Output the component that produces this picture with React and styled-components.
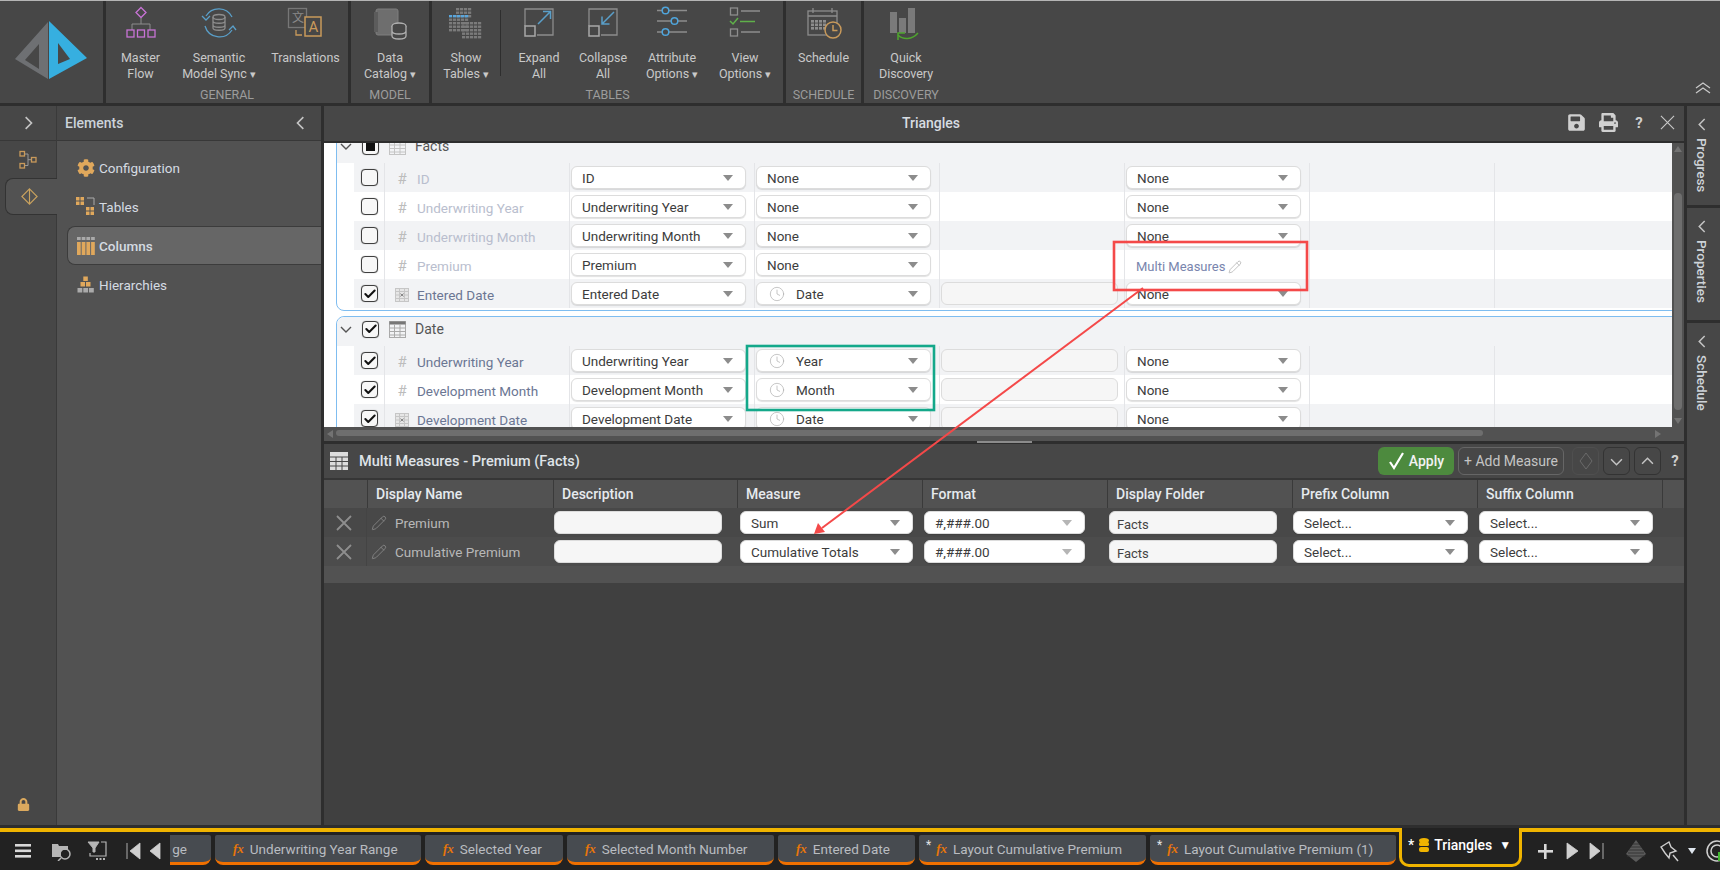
import React from "react";
import styled, { createGlobalStyle } from "styled-components";
import { Check, Clock, Pencil } from "lucide-react";
import { FaCog, FaLock, FaPrint, FaSave } from "react-icons/fa";

const GlobalStyle = createGlobalStyle`
  html, body, #root { margin: 0; height: 100%; }
  body {
    background: #2e2e2e;
    font-family: Roboto, "Liberation Sans", sans-serif;
    font-size: 13px;
    overflow: hidden;
  }
  * { box-sizing: border-box; }
`;

const Page = styled.div`
  position: relative;
  width: 1720px;
  height: 870px;
  display: flex;
  flex-direction: column;
  overflow: hidden;
  background: #2e2e2e;
`;

/* ---------- ribbon ---------- */

const Ribbon = styled.header`
  height: 106px;
  display: flex;
  background: #474747;
  border-top: 1px solid #b5b5b5;
  border-bottom: 3px solid #2e2e2e;
  position: relative;
`;

const LogoBox = styled.div`
  width: 103px;
  display: flex;
  align-items: flex-start;
  padding: 19px 0 0 14px;
`;

const Group = styled.section`
  width: ${(p) => p.$w}px;
  display: flex;
  flex-direction: column;
  border-left: 3px solid #2e2e2e;
`;

const GroupItems = styled.div`
  flex: 1;
  display: flex;
`;

const GroupLabel = styled.div`
  height: 19px;
  margin-bottom: -1px;
  line-height: 19px;
  text-align: center;
  color: #9c9c9c;
  font-size: 12.5px;
`;

const ToolButton = styled.div`
  width: ${(p) => p.$w}px;
  flex: none;
  display: flex;
  flex-direction: column;
  align-items: center;
  padding-top: 5px;
  color: #c9c9c9;
  font-size: 12.5px;
  line-height: 15.5px;
  text-align: center;
`;

const ToolIcon = styled.div`
  height: 38px;
  margin-bottom: 6px;
`;

const ToolSep = styled.div`
  width: 1px;
  height: 66px;
  margin: 9px 3px 0 0;
  background: #2e2e2e;
`;

const Caret = styled.span`
  font-size: 11px;
  margin-left: 3px;
`;

const RibbonCollapse = styled.div`
  position: absolute;
  right: 8px;
  top: 80px;
`;

/* ---------- body ---------- */

const Body = styled.div`
  height: 719px;
  display: flex;
`;

const Rail = styled.aside`
  width: 57px;
  display: flex;
  flex-direction: column;
  background: #474747;
  border-right: 1px solid #3a3a3a;
`;

const RailHead = styled.div`
  height: 35px;
  display: flex;
  align-items: center;
  justify-content: center;
  border-bottom: 1px solid #383838;
`;

const RailItem = styled.div`
  height: 37px;
  display: flex;
  align-items: center;
  justify-content: center;
  margin-left: ${(p) => (p.$active ? 5 : 0)}px;
  margin-right: ${(p) => (p.$active ? -1 : 0)}px;
  padding-right: ${(p) => (p.$active ? 5 : 0)}px;
  ${(p) =>
    p.$active &&
    `
    background: #525252;
    border: 1px solid #333;
    border-right: none;
    border-radius: 8px 0 0 8px;
  `}
`;

const RailFoot = styled.div`
  margin-top: auto;
  padding: 0 0 11px 17px;
  color: #dba95e;
  font-size: 13px;
`;

const Elements = styled.aside`
  width: 264px;
  background: #525252;
  display: flex;
  flex-direction: column;
`;

const ElementsHead = styled.div`
  height: 35px;
  display: flex;
  align-items: center;
  justify-content: space-between;
  padding: 0 13px 0 8px;
  background: #474747;
  border-bottom: 1px solid #383838;
  color: #ccd3da;
  font-size: 14px;
  font-weight: 500;
`;

const NavList = styled.nav`
  display: flex;
  flex-direction: column;
  padding: 7px 0 0 10px;
`;

const NavItem = styled.div`
  height: 39px;
  display: flex;
  align-items: center;
  gap: 4px;
  padding-left: ${(p) => (p.$active ? 8 : 9)}px;
  color: #d5dbe2;
  font-size: 13.5px;
  font-weight: ${(p) => (p.$active ? 500 : 400)};
  ${(p) =>
    p.$active &&
    `
    background: #666;
    border: 1px solid #3c3c3c;
    border-right: none;
    border-radius: 8px 0 0 8px;
  `}
`;

const NavIcon = styled.span`
  width: 19px;
  display: flex;
  justify-content: center;
  color: #e0a85c;
`;

const Main = styled.main`
  width: 1360px;
  margin-left: 3px;
  display: flex;
  flex-direction: column;
  background: #404040;
`;

const TitleBar = styled.div`
  height: 37px;
  flex: none;
  position: relative;
  display: flex;
  align-items: center;
  justify-content: flex-end;
  gap: 13px;
  padding: 0 9px 2px 0;
  background: #474747;
  border-bottom: 2px solid #2e2e2e;
  color: #d0d0d0;
`;

const TitleText = styled.div`
  position: absolute;
  left: 0;
  right: 146px;
  top: 9px;
  text-align: center;
  font-size: 14px;
  font-weight: 500;
  color: #d8dde2;
`;

const HelpMark = styled.span`
  width: 16px;
  margin-left: ${(p) => p.$ml || 0}px;
  text-align: center;
  font-size: 15px;
  font-weight: 700;
  color: #d0d0d0;
`;

const UpperPane = styled.div`
  height: 284px;
  flex: none;
  display: flex;
`;

const ListArea = styled.div`
  width: 1348px;
  background: #fff;
  overflow: hidden;
  padding-left: 12px;
`;

const TableGroup = styled.div`
  margin-top: ${(p) => p.$mt}px;
  margin-right: -12px;
  padding-bottom: 2px;
  border: 1px solid #7fbdf0;
  border-radius: 8px 0 0 8px;
`;

const GroupHead = styled.div`
  height: 29px;
  display: flex;
  align-items: center;
  padding-bottom: 5px;
  background: #f2f3f5;
  border-radius: 8px 0 0 0;
  color: #555;
  font-size: 14px;
`;

const Toggle = styled.span`
  width: 25px;
  display: flex;
  justify-content: center;
  padding-right: 8px;
`;

const HeadIcon = styled.span`
  width: 33px;
  margin-left: 3px;
  padding-left: 7px;
  display: flex;
  align-items: center;
  flex: none;
`;

const Row = styled.div`
  height: 29px;
  margin-left: 17px;
  display: grid;
  grid-template-columns: 30px repeat(6, 185px) 1fr;
  background: ${(p) => (p.$alt ? "#f2f3f5" : "#fff")};
`;

const Cell = styled.div`
  display: flex;
  align-items: center;
  padding-left: 1px;
  border-left: 1px solid #e4e5e8;
`;

const CheckCell = styled.div`
  display: flex;
  align-items: center;
  justify-content: center;
  padding-left: 1px;
`;

const NameCell = styled(Cell)`
  gap: 8px;
  padding: 2px 0 0 10px;
  color: ${(p) => (p.$on ? "#6b7693" : "#b9bece")};
  font-size: 13.5px;
`;

const Hash = styled.span`
  width: 14px;
  text-align: center;
  color: #bcbcbc;
  font-size: 15px;
`;

const LinkText = styled.div`
  display: flex;
  align-items: center;
  gap: 3px;
  padding: 4px 0 0 10px;
  color: #7985ad;
  font-size: 13px;
`;

const Box = styled.span`
  width: 17px;
  height: 17px;
  display: flex;
  align-items: center;
  justify-content: center;
  flex: none;
  background: #f7f7f7;
  border: 1px solid #3f3f3f;
  border-radius: 4px;
  box-shadow: 0 0 1px #888;
`;

const BoxFill = styled.span`
  width: 9px;
  height: 9px;
  background: #111;
`;

const Select = styled.div`
  width: ${(p) => p.$w || 175}px;
  height: 23px;
  margin-left: ${(p) => p.$ml || 0}px;
  display: flex;
  align-items: center;
  flex: none;
  padding: 0 12px 0 10px;
  background: #fff;
  border: 1px solid #dcdcdc;
  border-radius: 6px;
  box-shadow: 0 1px 1px rgba(0, 0, 0, 0.12);
  color: #3c3c3c;
  font-size: 13.5px;
`;

const SelectText = styled.span`
  flex: 1;
  display: flex;
  align-items: center;
  gap: 11px;
  white-space: nowrap;
`;

const Arrow = styled.span`
  width: 0;
  height: 0;
  border-left: 5px solid transparent;
  border-right: 5px solid transparent;
  border-top: 6px solid ${(p) => (p.$soft ? "#b5b5b5" : "#8c8c8c")};
`;

const Field = styled.div`
  width: ${(p) => p.$w}px;
  height: 23px;
  margin-left: ${(p) => p.$ml || 0}px;
  display: flex;
  align-items: center;
  flex: none;
  padding: 3px 0 0 7px;
  background: #f6f6f6;
  border: 1px solid #dcdcdc;
  border-radius: 6px;
  color: #444;
  font-size: 13px;
`;

const VScroll = styled.div`
  width: 12px;
  position: relative;
  background: #525252;
  &::before,
  &::after {
    content: "";
    position: absolute;
    left: 2px;
    border-left: 4px solid transparent;
    border-right: 4px solid transparent;
  }
  &::before {
    top: 3px;
    border-bottom: 6px solid #737373;
  }
  &::after {
    bottom: 3px;
    border-top: 6px solid #737373;
  }
`;

const VThumb = styled.div`
  position: absolute;
  left: 2px;
  right: 2px;
  top: 50px;
  height: 217px;
  border-radius: 4px;
  background: #6e6e6e;
`;

const HScroll = styled.div`
  height: 14px;
  flex: none;
  position: relative;
  background: #525252;
  &::before,
  &::after {
    content: "";
    position: absolute;
    top: 3px;
    border-top: 4px solid transparent;
    border-bottom: 4px solid transparent;
  }
  &::before {
    left: 3px;
    border-right: 6px solid #737373;
  }
  &::after {
    right: 23px;
    border-left: 6px solid #737373;
  }
`;

const HThumb = styled.div`
  position: absolute;
  left: 12px;
  width: 1147px;
  top: 3px;
  height: 6px;
  border-radius: 3px;
  background: #6e6e6e;
`;

const Splitter = styled.div`
  height: 3px;
  flex: none;
  display: flex;
  justify-content: center;
  background: #2e2e2e;
`;

const SplitGrip = styled.div`
  width: 55px;
  height: 2px;
  background: #8c8c8c;
`;

const LowerHead = styled.div`
  height: 36px;
  flex: none;
  display: flex;
  align-items: center;
  gap: 11px;
  padding: 0 1px 0 6px;
  background: #474747;
  border-bottom: 2px solid #363636;
`;

const LowerTitle = styled.div`
  flex: 1;
  color: #dfe3e8;
  font-size: 14.5px;
  font-weight: 500;
`;

const LowerTools = styled.div`
  display: flex;
  align-items: center;
  gap: 4px;
`;

const ApplyButton = styled.div`
  width: 76px;
  height: 28px;
  display: flex;
  align-items: center;
  justify-content: center;
  gap: 4px;
  background: #4d8a3e;
  border-radius: 6px;
  color: #f2f2f2;
  font-size: 14px;
  font-weight: 500;
`;

const AddButton = styled.div`
  width: 106px;
  height: 28px;
  display: flex;
  align-items: center;
  justify-content: center;
  border: 1px solid #666;
  border-radius: 6px;
  color: #c4c4c4;
  font-size: 14px;
`;

const IconButton = styled.div`
  width: 27px;
  height: 28px;
  margin-left: ${(p) => p.$ml || 0}px;
  display: flex;
  align-items: center;
  justify-content: center;
  border: 1px solid ${(p) => (p.$dim ? "#4f4f4f" : "#333")};
  border-radius: 6px;
`;

const GridRow = styled.div`
  height: ${(p) => p.$h}px;
  display: grid;
  grid-template-columns: 43px 186px 184px 185px 185px 185px 185px 185px 1fr;
  background: ${(p) => p.$bg};
`;

const HeadCell = styled.div`
  display: flex;
  align-items: center;
  padding-left: 8px;
  border-left: ${(p) => (p.$first ? "none" : "1px solid #3a3a3a")};
  color: #e6eaee;
  font-size: 14px;
  font-weight: 500;
`;

const BodyCell = styled.div`
  display: flex;
  align-items: center;
  gap: 8px;
  padding-left: ${(p) => p.$pl || 0}px;
  color: #b8b8b8;
  font-size: 13.5px;
`;

const RowX = styled(BodyCell)`
  justify-content: center;
  padding-right: 3px;
  border-right: 1px solid #444;
`;

const LowerRest = styled.div`
  height: 17px;
  flex: none;
  background: #525252;
`;

const SidePanel = styled.aside`
  width: 33px;
  margin-left: 3px;
  display: flex;
  flex-direction: column;
  background: #474747;
`;

const SideTab = styled.div`
  height: ${(p) => p.$h}px;
  display: flex;
  flex-direction: column;
  align-items: center;
  gap: 7px;
  padding: 12px 3px 0 0;
  border-bottom: ${(p) => (p.$last ? "none" : "3px solid #2e2e2e")};
  color: #ced3d8;
  font-size: 13.5px;
  font-weight: 500;
`;

const SideText = styled.span`
  writing-mode: vertical-rl;
`;

/* ---------- bottom tabs ---------- */

const TabBar = styled.footer`
  height: 42px;
  margin-top: 3px;
  display: flex;
  background: #222;
  border-top: 4px solid #f0b400;
`;

const LeftTools = styled.div`
  width: 170px;
  flex: none;
  display: flex;
  align-items: center;
  padding-left: 8px;
`;

const Slot = styled.span`
  width: ${(p) => p.$w}px;
  flex: none;
  display: flex;
  justify-content: center;
  margin-left: ${(p) => p.$ml || 0}px;
`;

const Tabs = styled.div`
  display: flex;
  gap: 4px;
  padding-top: 3px;
`;

const Tab = styled.div`
  width: ${(p) => p.$w}px;
  height: 30px;
  flex: none;
  display: flex;
  align-items: center;
  justify-content: ${(p) => (p.$clip ? "flex-end" : "flex-start")};
  gap: 6px;
  padding: ${(p) => (p.$clip ? "0 24px 0 0" : `0 0 0 ${p.$pl || 16}px`)};
  background: #474b50;
  border-bottom: 3px solid #f07000;
  border-radius: ${(p) => (p.$clip ? "0 2px 8px 0" : "2px 2px 8px 8px")};
  color: #b9bcc0;
  font-size: 13.5px;
  white-space: nowrap;
`;

const Fx = styled.span`
  font-family: "Liberation Serif", serif;
  font-style: italic;
  font-weight: 700;
  color: #e8760a;
  font-size: 13px;
`;

const Star = styled.span`
  align-self: flex-start;
  margin: 3px -1px 0 -9px;
  color: #e4e4e4;
  font-size: 12px;
`;

const ActiveTab = styled.div`
  width: 123px;
  height: 39px;
  margin: -4px 0 0 3px;
  flex: none;
  display: flex;
  align-items: center;
  gap: 5px;
  padding: 0 0 2px 6px;
  background: #222;
  border: 3px solid #f0b400;
  border-top: none;
  border-radius: 0 0 10px 10px;
  color: #fff;
  font-size: 14px;
  font-weight: 500;
`;

const ActiveCaret = styled.span`
  font-size: 12px;
  margin-left: 2px;
`;

const RightTools = styled.div`
  flex: 1;
  display: flex;
  align-items: center;
  padding-left: 13px;
`;

const Annotations = styled.svg`
  position: absolute;
  left: 0;
  top: 0;
  pointer-events: none;
`;

/* ---------- drawn icons ---------- */

const gray = "#8d8d8d";
const blue = "#5a9fc9";
const purple = "#c873d6";
const orange = "#c99a5b";

const Chevron = ({ dir = "right", size = 12, color = "#c4c4c4", w = 1.4 }) => {
  const paths = {
    right: "M4 1l5 5-5 5",
    left: "M8 1L3 6l5 5",
    down: "M1 4l5 5 5-5",
    up: "M1 8l5-5 5 5",
  };
  return (
    <svg width={size} height={size} viewBox="0 0 12 12" fill="none">
      <path d={paths[dir]} stroke={color} strokeWidth={w} />
    </svg>
  );
};

const Logo = () => (
  <svg width="74" height="60" viewBox="0 0 74 60">
    <path
      fill="#6e7073"
      fillRule="evenodd"
      d="M34 2L1 39l33 20zM25 24v25L11 40z"
    />
    <path d="M35 1v58L73 38zM44 23l12 16-12 5z" fill="#36afe0" fillRule="evenodd" />
  </svg>
);

const IconFrame = ({ children }) => (
  <svg width="40" height="36" viewBox="0 0 40 36" fill="none">
    {children}
  </svg>
);

const MasterFlowIcon = () => (
  <IconFrame>
    <path d="M20 1.500l5 5-5 5-5-5z" stroke={purple} strokeWidth="1.300" />
    <path d="M20 12v6M11 24v-6h18v6" stroke={gray} />
    {[6, 16.500, 27].map((x) => (
      <rect key={x} x={x} y="24" width="7" height="7" stroke={purple} strokeWidth="1.300" />
    ))}
  </IconFrame>
);

const SyncIcon = () => (
  <IconFrame>
    <path d="M7 10A15 15 0 0 1 33 11M33 24A15 15 0 0 1 6 20" stroke={blue} strokeWidth="1.300" />
    <path d="M3 10l4 4 4-4M30 24l4-4 3 4" stroke={blue} strokeWidth="1.300" />
    <ellipse cx="20" cy="11" rx="6" ry="2.500" stroke={gray} strokeWidth="1.300" />
    <path d="M14 11v11c0 3 12 3 12 0V11M14 15c0 3 12 3 12 0M14 19c0 3 12 3 12 0" stroke={gray} strokeWidth="1.300" />
  </IconFrame>
);

const TranslateIcon = () => (
  <IconFrame>
    <rect x="2.500" y="2.500" width="18" height="19" stroke="#777" strokeWidth="1.300" />
    <text x="6" y="16" fontSize="12" fill="#8a8a8a" fontFamily="Noto Sans CJK SC, sans-serif">文</text>
    <rect x="19" y="11" width="16" height="19" fill="#474747" stroke={orange} strokeWidth="1.500" />
    <text x="22.500" y="26" fontSize="15" fill={orange} fontFamily="Roboto, sans-serif">A</text>
    <path d="M10 24v5h6" stroke={orange} strokeWidth="1.300" />
  </IconFrame>
);

const CatalogIcon = () => (
  <IconFrame>
    <rect x="6" y="3" width="22" height="26" rx="2" fill="#6e6e6e" stroke="#7e7e7e" />
    <rect x="4" y="6" width="4" height="20" fill="#5c5c5c" />
    <ellipse cx="29" cy="20" rx="7" ry="3" fill="#474747" stroke="#b0b0b0" strokeWidth="1.300" />
    <path d="M22 20v10c0 4 14 4 14 0V20M22 25c0 4 14 4 14 0" fill="#474747" stroke="#b0b0b0" strokeWidth="1.300" />
  </IconFrame>
);

const cellsOf = (x0, y0, cols, rows) => {
  const out = [];
  for (let r = 0; r < rows; r++) {
    for (let c = 0; c < cols; c++) {
      out.push([x0 + c * 4, y0 + r * 3.500]);
    }
  }
  return out;
};

const ShowTablesIcon = () => (
  <IconFrame>
    {cellsOf(10, 2, 4, 3).map(([x, y]) => (
      <rect key={`${x}-${y}`} x={x} y={y} width="3.200" height="2.400" fill="#7b7b7b" />
    ))}
    {cellsOf(3, 9, 5, 5).map(([x, y]) => (
      <rect key={`${x}-${y}`} x={x} y={y} width="3.200" height="2.400" fill={y === 9 ? "#5aa6dc" : "#7b7b7b"} />
    ))}
    {cellsOf(16, 16, 5, 5).map(([x, y]) => (
      <rect key={`${x}-${y}`} x={x} y={y} width="3.200" height="2.400" fill="#7b7b7b" />
    ))}
  </IconFrame>
);

const ExpandIcon = () => (
  <IconFrame>
    <path d="M6 20V3h28v26H18" stroke={gray} strokeWidth="1.300" />
    <rect x="6" y="20" width="10" height="10" stroke="#a8a8a8" strokeWidth="1.500" />
    <path d="M19 18L31 6M24 5.500h7.500V13" stroke={blue} strokeWidth="1.500" />
  </IconFrame>
);

const CollapseIcon = () => (
  <IconFrame>
    <path d="M6 20V3h28v26H18" stroke={gray} strokeWidth="1.300" />
    <rect x="6" y="20" width="10" height="10" stroke="#a8a8a8" strokeWidth="1.500" />
    <path d="M31 6L19 18M19 10.500V18h7.500" stroke={blue} strokeWidth="1.500" />
  </IconFrame>
);

const AttributeIcon = () => (
  <IconFrame>
    <path d="M5 4.500h5M17 4.500h18M5 15h14M26 15h9M5 26h5M17 26h18" stroke={gray} strokeWidth="1.300" />
    <circle cx="13.500" cy="4.500" r="3.300" stroke="#4fa5dc" strokeWidth="1.500" />
    <circle cx="22.500" cy="15" r="3.300" stroke="#4fa5dc" strokeWidth="1.500" />
    <circle cx="13.500" cy="26" r="3.300" stroke="#4fa5dc" strokeWidth="1.500" />
  </IconFrame>
);

const ViewIcon = () => (
  <IconFrame>
    <rect x="5.500" y="2" width="7" height="7" stroke={gray} strokeWidth="1.300" />
    <path d="M16 5h19M16 26h19" stroke={gray} strokeWidth="1.300" />
    <path d="M5 15l3 3 5-6M15 15.500h15" stroke="#5fb04a" strokeWidth="1.500" />
    <rect x="5.500" y="23" width="7" height="7" stroke={gray} strokeWidth="1.300" />
  </IconFrame>
);

const ScheduleIcon = () => (
  <IconFrame>
    <rect x="4" y="5" width="29" height="24" stroke={gray} strokeWidth="1.300" />
    <path d="M4 10h29M9 2v5M28 2v5" stroke={gray} strokeWidth="1.300" />
    {cellsOf(7, 14, 4, 3).map(([x, y]) => (
      <rect key={`${x}-${y}`} x={x} y={y} width="3" height="2.600" fill={gray} />
    ))}
    <circle cx="29" cy="24" r="8" fill="#474747" stroke={orange} strokeWidth="1.500" />
    <path d="M29 19v5.500h4.500" stroke={orange} strokeWidth="1.500" />
  </IconFrame>
);

const DiscoveryIcon = () => (
  <IconFrame>
    <rect x="4" y="6" width="7" height="21" fill="#7a7a7a" />
    <rect x="13" y="12" width="7" height="15" fill="#7a7a7a" />
    <rect x="22" y="2" width="7" height="25" fill="#7a7a7a" />
    <path d="M12 29c5 5 14 5 20-2" stroke="#4fa52e" strokeWidth="1.500" />
    <path d="M12 34v-7h7" stroke="#4fa52e" strokeWidth="1.500" />
  </IconFrame>
);

const FlowIcon = () => (
  <svg width="20" height="20" viewBox="0 0 20 20" fill="none" stroke={orange} strokeWidth="1.300">
    <rect x="2" y="1.500" width="4.500" height="4.500" />
    <rect x="2" y="13.500" width="4.500" height="4.500" />
    <rect x="13.500" y="7.500" width="4.500" height="4.500" />
    <path d="M7 4h3v11.500H7M10 9.700h3" stroke="#999" strokeWidth="1" />
  </svg>
);

const DiamondIcon = ({ size = 19, stroke = "#c9a25e" }) => (
  <svg width={size} height={size} viewBox="0 0 20 20" fill="none" stroke={stroke} strokeWidth="1.200">
    <path d="M10 2l8 8-8 8-8-8zM10 2v16" />
  </svg>
);

const TablesIcon = () => (
  <svg width="19" height="19" viewBox="0 0 19 19" fill="#e0a85c">
    {[[0, 0], [4.500, 0], [0, 4.500], [4.500, 4.500], [10, 10], [14.500, 10], [10, 14.500], [14.500, 14.500]].map(([x, y]) => (
      <rect key={`${x}-${y}`} x={x} y={y} width="3.500" height="3.500" />
    ))}
    <path d="M11 1h7v7" fill="none" stroke="#aaa" />
  </svg>
);

const ColumnsIcon = () => (
  <svg width="18" height="18" viewBox="0 0 18 18">
    {[0, 4.700, 9.400, 14.100].map((x) => (
      <g key={x}>
        <rect x={x} y="0" width="3.700" height="3" fill="#aaa" />
        <rect x={x} y="5" width="3.700" height="13" fill="#e0a85c" />
      </g>
    ))}
  </svg>
);

const HierarchyIcon = () => (
  <svg width="17" height="17" viewBox="0 0 17 17">
    <rect x="6.300" y="0.500" width="4.500" height="4.500" fill="#e0a85c" />
    <rect x="3.500" y="6" width="4.500" height="4.500" fill="#e0a85c" />
    <rect x="9" y="6" width="4.500" height="4.500" fill="#e0a85c" />
    {[0.500, 6.300, 12].map((x) => (
      <rect key={x} x={x} y="12" width="4.800" height="4.500" fill="#aaa" />
    ))}
  </svg>
);

const TableIcon = ({ color = "#aaa", head = "#777", size = 17 }) => (
  <svg width={size} height={size} viewBox="0 0 17 17" fill="none">
    <rect x="0.500" y="0.500" width="16" height="16" stroke={color} />
    <rect x="0.500" y="0.500" width="16" height="3" fill={head} />
    <path d="M0.500 7h16M0.500 10.500h16M0.500 14h16M5.500 3.500v13M11 3.500v13" stroke={color} />
  </svg>
);

const DateIcon = () => (
  <svg width="14" height="14" viewBox="0 0 14 14" fill="none">
    <rect x="0.500" y="0.500" width="13" height="13" fill="#e6e6e6" stroke="#c6c6c6" />
    <path d="M0.500 3.500h13M0.500 7h13M0.500 10.500h13M4.500 0.500v13M9.500 0.500v13" stroke="#c6c6c6" />
    <path d="M5.500 5.500l3 3M8.500 5.500l-3 3" stroke="#888" />
  </svg>
);

const LowerGridIcon = () => (
  <svg width="18" height="18" viewBox="0 0 18 18">
    <rect width="18" height="18" fill="#dcdcdc" />
    <path d="M0 5h18M0 9.500h18M0 14h18M6 5v13M12 5v13" stroke="#474747" />
  </svg>
);

const CrossIcon = ({ size = 16, color = "#8e8e8e", w = 1.800 }) => (
  <svg width={size} height={size} viewBox="0 0 16 16" fill="none">
    <path d="M1 1l14 14M15 1L1 15" stroke={color} strokeWidth={w} />
  </svg>
);

const Tick = () => (
  <svg width="17" height="20" viewBox="0 0 17 20" fill="none">
    <path d="M2 11l4 6 9-15" stroke="#fff" strokeWidth="2.200" />
  </svg>
);

const FolderSearchIcon = () => (
  <svg width="22" height="20" viewBox="0 0 22 20" fill="none">
    <path d="M1 3h6l1 2h9v4H10v7H1z" fill="#b5b5b5" />
    <circle cx="14" cy="13" r="5" stroke="#b5b5b5" strokeWidth="1.500" />
    <path d="M10 17l-3 3" stroke="#b5b5b5" strokeWidth="1.500" />
  </svg>
);

const FilterTableIcon = () => (
  <svg width="20" height="20" viewBox="0 0 20 20" fill="none" stroke="#b5b5b5">
    <path d="M1 1h11l-4 6v4H6V7z" fill="#b5b5b5" />
    <path d="M14 1h5v14H3v-3" strokeWidth="1.200" />
    <path d="M9 18h2M12.500 18h2M16 18h2" strokeWidth="2" />
  </svg>
);

const Media = ({ kind, color = "#d0d0d0" }) => {
  const d = {
    first: "M1 1v16M14 1v16L4 9z",
    prev: "M12 1v16L2 9z",
    next: "M3 1v16l11-8z",
    last: "M2 1v16l10-8zM15 1v16",
  };
  return (
    <svg width="17" height="18" viewBox="0 0 17 18" fill={color} stroke={color} strokeWidth="0.800">
      <path d={d[kind]} />
    </svg>
  );
};

const PinIcon = () => (
  <svg width="20" height="22" viewBox="0 0 20 22" fill="none" stroke="#cfcfcf" strokeWidth="1.400">
    <path d="M1 7l8-5 2 5 5 4-6 2-1 5-4-5z" />
    <path d="M13 15l5 6" />
  </svg>
);

const SmallLogo = () => (
  <svg width="20" height="22" viewBox="0 0 20 22">
    <path d="M10 0L0 14l10 8zM10 0l10 14-10 8z" fill="#5a5a5a" />
    <path d="M3 10h14M2 13h16M5 7h10M7 4h6M1 16h18" stroke="#343434" />
  </svg>
);

const SpiralIcon = () => (
  <svg width="24" height="24" viewBox="0 0 24 24" fill="none" stroke="#d0d0d0" strokeWidth="1.500">
    <circle cx="12" cy="12" r="10" />
    <circle cx="12" cy="12" r="6" />
    <rect x="13" y="13" width="9" height="9" fill="#41b82f" stroke="none" />
  </svg>
);

const DbIcon = () => (
  <svg width="10" height="14" viewBox="0 0 10 14" fill="#f0b400">
    <ellipse cx="5" cy="2.500" rx="5" ry="2.500" />
    <rect y="4" width="10" height="4" rx="1.500" />
    <rect y="9" width="10" height="5" rx="2" />
  </svg>
);

/* ---------- data ---------- */

const ribbonGroups = [
  {
    label: "GENERAL",
    w: 245,
    items: [
      { w: 69, lines: ["Master", "Flow"], icon: <MasterFlowIcon /> },
      { w: 88, lines: ["Semantic", "Model Sync"], caret: true, icon: <SyncIcon /> },
      { w: 85, lines: ["Translations"], icon: <TranslateIcon /> },
    ],
  },
  {
    label: "MODEL",
    w: 81,
    items: [{ w: 78, lines: ["Data", "Catalog"], caret: true, icon: <CatalogIcon /> }],
  },
  {
    label: "TABLES",
    w: 354,
    items: [
      { w: 68, lines: ["Show", "Tables"], caret: true, icon: <ShowTablesIcon /> },
      { sep: true },
      { w: 70, lines: ["Expand", "All"], icon: <ExpandIcon /> },
      { w: 58, lines: ["Collapse", "All"], icon: <CollapseIcon /> },
      { w: 80, lines: ["Attribute", "Options"], caret: true, icon: <AttributeIcon /> },
      { w: 66, lines: ["View", "Options"], caret: true, icon: <ViewIcon /> },
    ],
  },
  {
    label: "SCHEDULE",
    w: 78,
    items: [{ w: 75, lines: ["Schedule"], icon: <ScheduleIcon /> }],
  },
  {
    label: "DISCOVERY",
    w: 87,
    items: [{ w: 84, lines: ["Quick", "Discovery"], icon: <DiscoveryIcon /> }],
  },
];

const factRows = [
  { name: "ID", kind: "hash" },
  { name: "Underwriting Year", kind: "hash" },
  { name: "Underwriting Month", kind: "hash" },
  { name: "Premium", kind: "hash", multi: true },
  { name: "Entered Date", kind: "date", on: true, time: "Date" },
];

const dateRows = [
  { name: "Underwriting Year", kind: "hash", on: true, time: "Year" },
  { name: "Development Month", kind: "hash", on: true, time: "Month" },
  { name: "Development Date", kind: "date", on: true, time: "Date" },
];

const measures = [
  { name: "Premium", measure: "Sum" },
  { name: "Cumulative Premium", measure: "Cumulative Totals" },
];

const tabs = [
  { w: 206, text: "Underwriting Year Range", pl: 18 },
  { w: 138, text: "Selected Year", pl: 18 },
  { w: 207, text: "Selected Month Number", pl: 18 },
  { w: 137, text: "Entered Date", pl: 18 },
  { w: 227, text: "Layout Cumulative Premium", star: true },
  { w: 246, text: "Layout Cumulative Premium (1)", star: true },
];

const Pick = ({ children, time, w, ml, soft }) => (
  <Select $w={w} $ml={ml}>
    <SelectText>
      {time && <Clock size={16} strokeWidth={1} color="#aaa" style={{ marginLeft: 2 }} />}
      {children}
    </SelectText>
    <Arrow $soft={soft} />
  </Select>
);

const ColumnRow = ({ row, alt }) => (
  <Row $alt={alt}>
    <CheckCell>
      <Box>{row.on && <Check size={14} strokeWidth={3.5} color="#111" />}</Box>
    </CheckCell>
    <NameCell $on={row.on}>
      {row.kind === "hash" ? <Hash>#</Hash> : <DateIcon />}
      {row.name}
    </NameCell>
    <Cell>
      <Pick>{row.name}</Pick>
    </Cell>
    <Cell>
      <Pick time={row.time}>{row.time || "None"}</Pick>
    </Cell>
    <Cell>{row.time && <Field $w={177} />}</Cell>
    <Cell>
      {row.multi ? (
        <LinkText>
          Multi Measures
          <Pencil size={14} strokeWidth={1} color="#999" />
        </LinkText>
      ) : (
        <Pick>None</Pick>
      )}
    </Cell>
    <Cell />
    <Cell />
  </Row>
);

function App() {
  return (
    <Page>
      <GlobalStyle />
      <Ribbon>
        <LogoBox>
          <Logo />
        </LogoBox>
        {ribbonGroups.map((group) => (
          <Group key={group.label} $w={group.w}>
            <GroupItems>
              {group.items.map((item, i) =>
                item.sep ? (
                  <ToolSep key={i} />
                ) : (
                  <ToolButton key={i} $w={item.w}>
                    <ToolIcon>{item.icon}</ToolIcon>
                    {item.lines.map((line, j) => (
                      <div key={line}>
                        {line}
                        {item.caret && j === item.lines.length - 1 && <Caret>▾</Caret>}
                      </div>
                    ))}
                  </ToolButton>
                )
              )}
            </GroupItems>
            <GroupLabel>{group.label}</GroupLabel>
          </Group>
        ))}
        <RibbonCollapse>
          <svg width="18" height="14" viewBox="0 0 18 14" fill="none" stroke="#c8c8c8" strokeWidth="1.300">
            <path d="M2 7l7-5 7 5M2 12l7-5 7 5" />
          </svg>
        </RibbonCollapse>
      </Ribbon>

      <Body>
        <Rail>
          <RailHead>
            <Chevron dir="right" size={14} />
          </RailHead>
          <RailItem>
            <FlowIcon />
          </RailItem>
          <RailItem $active>
            <DiamondIcon />
          </RailItem>
          <RailFoot>
            <FaLock />
          </RailFoot>
        </Rail>

        <Elements>
          <ElementsHead>
            Elements
            <Chevron dir="left" size={14} />
          </ElementsHead>
          <NavList>
            <NavItem>
              <NavIcon>
                <FaCog size={18} />
              </NavIcon>
              Configuration
            </NavItem>
            <NavItem>
              <NavIcon>
                <TablesIcon />
              </NavIcon>
              Tables
            </NavItem>
            <NavItem $active>
              <NavIcon>
                <ColumnsIcon />
              </NavIcon>
              Columns
            </NavItem>
            <NavItem>
              <NavIcon>
                <HierarchyIcon />
              </NavIcon>
              Hierarchies
            </NavItem>
          </NavList>
        </Elements>

        <Main>
          <TitleBar>
            <TitleText>Triangles</TitleText>
            <FaSave size={19} />
            <FaPrint size={19} />
            <HelpMark>?</HelpMark>
            <CrossIcon size={15} color="#c8c8c8" w={1.2} />
          </TitleBar>

          <UpperPane>
            <ListArea>
              <TableGroup $mt={-10}>
                <GroupHead>
                  <Toggle>
                    <Chevron dir="down" size={12} color="#555" />
                  </Toggle>
                  <Box>
                    <BoxFill />
                  </Box>
                  <HeadIcon>
                    <TableIcon color="#c4c4c4" head="#ddd" />
                  </HeadIcon>
                  Facts
                </GroupHead>
                {factRows.map((row, i) => (
                  <ColumnRow key={row.name} row={row} alt={i % 2 === 0} />
                ))}
              </TableGroup>
              <TableGroup $mt={5}>
                <GroupHead>
                  <Toggle>
                    <Chevron dir="down" size={12} color="#555" />
                  </Toggle>
                  <Box>
                    <Check size={14} strokeWidth={3.5} color="#111" />
                  </Box>
                  <HeadIcon>
                    <TableIcon />
                  </HeadIcon>
                  Date
                </GroupHead>
                {dateRows.map((row, i) => (
                  <ColumnRow key={row.name} row={row} alt={i % 2 === 0} />
                ))}
              </TableGroup>
            </ListArea>
            <VScroll>
              <VThumb />
            </VScroll>
          </UpperPane>
          <HScroll>
            <HThumb />
          </HScroll>
          <Splitter>
            <SplitGrip />
          </Splitter>

          <LowerHead>
            <LowerGridIcon />
            <LowerTitle>Multi Measures - Premium (Facts)</LowerTitle>
            <LowerTools>
              <ApplyButton>
                <Tick />
                Apply
              </ApplyButton>
              <AddButton>+ Add Measure</AddButton>
              <IconButton $ml={4} $dim>
                <svg width="14" height="20" viewBox="0 0 14 20" fill="none" stroke="#6a6a6a">
                  <path d="M7 2l6 8-6 8-6-8z" />
                </svg>
              </IconButton>
              <IconButton>
                <Chevron dir="down" size={13} />
              </IconButton>
              <IconButton>
                <Chevron dir="up" size={13} />
              </IconButton>
            </LowerTools>
            <HelpMark $ml={-5}>?</HelpMark>
          </LowerHead>

          <GridRow $h={28} $bg="#525252">
            <HeadCell $first />
            <HeadCell>Display Name</HeadCell>
            <HeadCell>Description</HeadCell>
            <HeadCell>Measure</HeadCell>
            <HeadCell>Format</HeadCell>
            <HeadCell>Display Folder</HeadCell>
            <HeadCell>Prefix Column</HeadCell>
            <HeadCell>Suffix Column</HeadCell>
            <HeadCell />
          </GridRow>
          {measures.map((m, i) => (
            <GridRow key={m.name} $h={29} $bg={i === 0 ? "#484848" : "#4c4c4c"}>
              <RowX>
                <CrossIcon />
              </RowX>
              <BodyCell $pl={4}>
                <Pencil size={16} strokeWidth={1} color="#9a9a9a" />
                {m.name}
              </BodyCell>
              <BodyCell>
                <Field $w={168} $ml={1} />
              </BodyCell>
              <BodyCell>
                <Pick w={173} ml={3}>
                  {m.measure}
                </Pick>
              </BodyCell>
              <BodyCell>
                <Pick w={161} ml={2} soft>
                  #,###.00
                </Pick>
              </BodyCell>
              <BodyCell>
                <Field $w={168} $ml={2}>
                  Facts
                </Field>
              </BodyCell>
              <BodyCell>
                <Pick w={175} ml={1}>
                  Select...
                </Pick>
              </BodyCell>
              <BodyCell>
                <Pick w={174} ml={2}>
                  Select...
                </Pick>
              </BodyCell>
              <BodyCell />
            </GridRow>
          ))}
          <LowerRest />
        </Main>

        <SidePanel>
          <SideTab $h={102}>
            <Chevron dir="left" size={13} />
            <SideText>Progress</SideText>
          </SideTab>
          <SideTab $h={115}>
            <Chevron dir="left" size={13} />
            <SideText>Properties</SideText>
          </SideTab>
          <SideTab $h={120} $last>
            <Chevron dir="left" size={13} />
            <SideText>Schedule</SideText>
          </SideTab>
        </SidePanel>
      </Body>

      <TabBar>
        <LeftTools>
          <Slot $w={30}>
            <svg width="16" height="14" viewBox="0 0 16 14" fill="#d8d8d8">
              <rect width="16" height="2.600" />
              <rect y="5.500" width="16" height="2.600" />
              <rect y="11" width="16" height="2.600" />
            </svg>
          </Slot>
          <Slot $w={48}>
            <FolderSearchIcon />
          </Slot>
          <Slot $w={22}>
            <FilterTableIcon />
          </Slot>
          <Slot $w={24} $ml={14}>
            <Media kind="first" />
          </Slot>
          <Slot $w={20}>
            <Media kind="prev" />
          </Slot>
        </LeftTools>
        <Tabs>
          <Tab $w={41} $clip>
            ge
          </Tab>
          {tabs.map((tab) => (
            <Tab key={tab.text} $w={tab.w} $pl={tab.pl}>
              {tab.star && <Star>*</Star>}
              <Fx>fx</Fx>
              {tab.text}
            </Tab>
          ))}
        </Tabs>
        <ActiveTab>
          <span>*</span>
          <DbIcon />
          Triangles
          <ActiveCaret>▼</ActiveCaret>
        </ActiveTab>
        <RightTools>
          <Slot $w={20}>
            <svg width="15" height="15" viewBox="0 0 15 15" fill="#d8d8d8">
              <rect x="6" width="2.600" height="15" />
              <rect y="6" width="15" height="2.600" />
            </svg>
          </Slot>
          <Slot $w={20} $ml={7}>
            <Media kind="next" />
          </Slot>
          <Slot $w={20} $ml={4}>
            <Media kind="last" />
          </Slot>
          <Slot $w={24} $ml={18}>
            <SmallLogo />
          </Slot>
          <Slot $w={24} $ml={10}>
            <PinIcon />
          </Slot>
          <Slot $w={8} $ml={6}>
            <svg width="8" height="6" viewBox="0 0 8 6" fill="#dfe6ee">
              <path d="M0 0h8L4 6z" />
            </svg>
          </Slot>
          <Slot $w={24} $ml={9}>
            <SpiralIcon />
          </Slot>
        </RightTools>
      </TabBar>

      <Annotations width="1720" height="870" viewBox="0 0 1720 870" fill="none">
        <rect x="1114" y="242" width="193" height="48" stroke="#f44949" strokeWidth="2.600" />
        <rect x="747" y="346" width="187" height="64" stroke="#14a88a" strokeWidth="2.600" />
        <path d="M1143 288L822 528" stroke="#f44949" strokeWidth="2" />
        <path d="M814 534l4-11 7 9z" fill="#f44949" />
      </Annotations>
    </Page>
  );
}

export default App;
